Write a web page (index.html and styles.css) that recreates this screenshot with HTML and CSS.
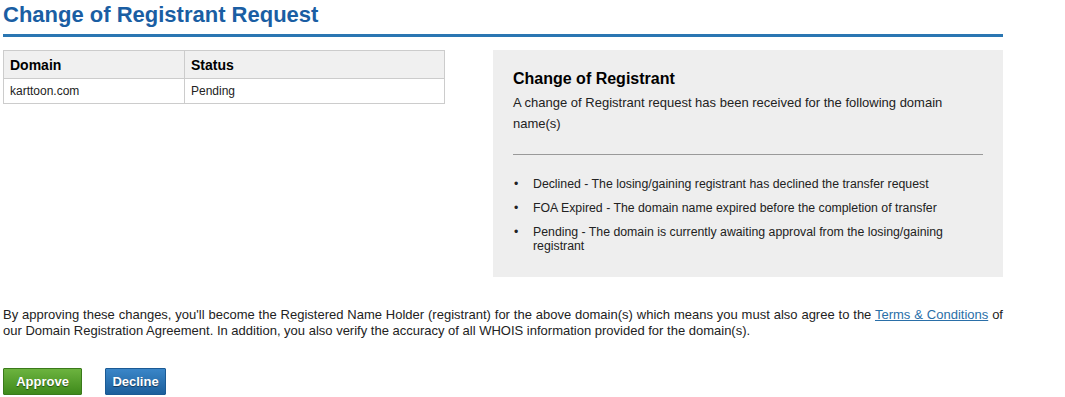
FILE: index.html
```html
<!DOCTYPE html>
<html lang="en">
<head>
  <meta charset="UTF-8" />
  <title>Change of Registrant Request</title>
  <link rel="stylesheet" href="styles.css">
</head>
<body>
  <div class="page">
    <h1 class="page-title">Change of Registrant Request</h1>

    <div class="summary">
      <table class="domains">
        <thead>
          <tr>
            <th class="col-domain">Domain</th>
            <th>Status</th>
          </tr>
        </thead>
        <tbody>
          <tr>
            <td>karttoon.com</td>
            <td>Pending</td>
          </tr>
        </tbody>
      </table>

      <div class="info-box">
        <h2>Change of Registrant</h2>
        <p>A change of Registrant request has been received for the following domain name(s)</p>
        <hr />
        <ul>
          <li>Declined - The losing/gaining registrant has declined the transfer request</li>
          <li>FOA Expired - The domain name expired before the completion of transfer</li>
          <li>Pending - The domain is currently awaiting approval from the losing/gaining registrant</li>
        </ul>
      </div>
    </div>

    <p class="agreement">
      By approving these changes, you'll become the Registered Name Holder (registrant) for the above domain(s) which means you must also agree to the <a href="#">Terms &amp; Conditions</a> of our Domain Registration Agreement. In addition, you also verify the accuracy of all WHOIS information provided for the domain(s).
    </p>

    <div class="actions">
      <button class="btn btn-approve">Approve</button>
      <button class="btn btn-decline">Decline</button>
    </div>
  </div>
</body>
</html>
```

FILE: styles.css
```css
body {
  font-family: Arial, 'Liberation Sans', sans-serif;
  font-size: 12px;
  color: #222;
  margin: 0;
  padding: 0 3px;
  background: #fff;
}

.page {
  width: 1000px;
}

.page-title {
  margin: 0;
  padding-top: 3px;
  padding-bottom: 7px;
  font-size: 22px;
  line-height: 24px;
  color: #1a5ea3;
  border-bottom: 3px solid #2a76b2;
}

.summary {
  display: flex;
  justify-content: space-between;
  align-items: flex-start;
  margin-top: 13px;
}

table.domains {
  width: 442px;
  border-collapse: collapse;
  border: 1px solid #ccc;
}

table.domains th {
  background-color: #f0f0f0;
  font-size: 14px;
  text-align: left;
  padding: 5px 6px 4px;
  height: 18px;
  border: 1px solid #ccc;
  color: #000;
}

table.domains th.col-domain {
  width: 168px;
}

table.domains td {
  padding: 4px 6px 4px;
  height: 16px;
  border: 1px solid #ccc;
}

.info-box {
  width: 470px;
  background-color: #eee;
  padding: 20px 20px 14px;
}

.info-box h2 {
  margin: 0 0 4px;
  font-size: 16px;
  color: #000;
}

.info-box p {
  margin: 0;
  font-size: 13px;
  line-height: 21px;
}

.info-box hr {
  border: none;
  border-top: 1px solid #999;
  margin: 20px 0 22px;
}

.info-box ul {
  margin: 0;
  padding: 0;
  list-style: none;
}

.info-box li {
  display: flex;
  font-size: 12.3px;
  line-height: 14px;
  margin-bottom: 10px;
}

.info-box li::before {
  content: "\2022";
  flex: 0 0 20px;
  padding-left: 1px;
  box-sizing: border-box;
}

.agreement {
  margin: 30px 0 0;
  font-size: 13px;
  line-height: 16px;
  text-align: justify;
}

.agreement a {
  color: #2a6fa8;
}

.actions {
  display: flex;
  gap: 23px;
  margin-top: 29px;
}

.btn {
  font-family: Arial, 'Liberation Sans', sans-serif;
  font-size: 13px;
  font-weight: bold;
  color: #fff;
  height: 27px;
  padding: 0;
  border-radius: 1px;
  cursor: pointer;
  text-shadow: 0 1px 1px rgba(0,0,0,0.5);
}

.btn-approve {
  width: 79px;
  background: linear-gradient(#6cb33f, #3f8a1b);
  border: 1px solid #3a7a1a;
}

.btn-decline {
  width: 61px;
  background: linear-gradient(#3a86c8, #1c5f9c);
  border: 1px solid #1b5a94;
}
```
